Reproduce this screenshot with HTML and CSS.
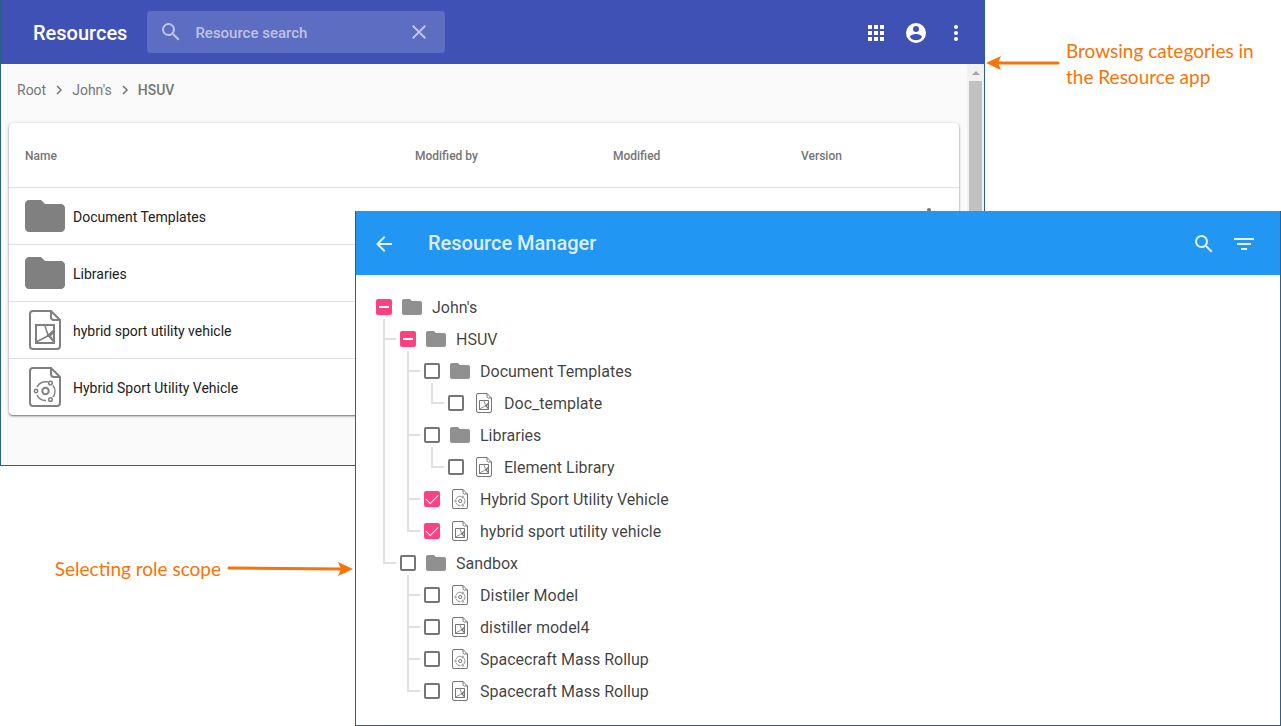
FILE: index.html
```html
<!DOCTYPE html>
<html lang="en">
<head>
<meta charset="utf-8">
<title>Resources and Resource Manager</title>
<link rel="stylesheet" href="styles.css">
</head>
<body>
<svg class="defs" width="0" height="0" aria-hidden="true">
  <symbol id="folder" viewBox="0 0 20 16"><path d="M8 0H2C.9 0 0 .9 0 2v12c0 1.100.9 2 2 2h16c1.100 0 2-.9 2-2V4c0-1.100-.9-2-2-2h-8z"/></symbol>
  <symbol id="diagram" viewBox="0 0 32 40">
    <g fill="none" stroke="currentColor" stroke-width="2">
      <path d="M22 1H4a3 3 0 0 0-3 3v32a3 3 0 0 0 3 3h24a3 3 0 0 0 3-3V10z"/>
      <path d="M22 1v6a3 3 0 0 0 3 3h6"/>
      <path d="M7 15h18v18H7z"/>
      <path d="M7 32l10-5 8-7M16 16l3 9 6 7" stroke-width="1.500"/>
    </g>
    <path d="M16 27l5-4 4-3v3l-3 3 3 4v3l-5-6z"/>
  </symbol>
  <symbol id="model" viewBox="0 0 32 40">
    <g fill="none" stroke="currentColor" stroke-width="2">
      <path d="M22 1H4a3 3 0 0 0-3 3v32a3 3 0 0 0 3 3h24a3 3 0 0 0 3-3V10z"/>
      <path d="M22 1v6a3 3 0 0 0 3 3h6"/>
      <circle cx="16.500" cy="24" r="3.200"/>
      <g stroke-width="1.500">
        <circle cx="7" cy="24" r="1.700"/><circle cx="21.500" cy="16" r="1.800"/><circle cx="21.500" cy="32.500" r="1.800"/>
        <path d="M8 20a9.500 9.500 0 0 1 11-5M8 28a9.500 9.500 0 0 0 9 5.500M24 18.500a9.500 9.500 0 0 1 0 11.500"/>
      </g>
    </g>
  </symbol>
  <symbol id="search" viewBox="0 0 24 24"><path d="M15.500 14h-.79l-.28-.27A6.471 6.471 0 0 0 16 9.500 6.500 6.500 0 1 0 9.500 16c1.610 0 3.090-.59 4.230-1.570l.27.28v.79l5 4.990L20.490 19l-4.990-5zm-6 0C7.010 14 5 11.990 5 9.500S7.010 5 9.500 5 14 7.010 14 9.500 11.990 14 9.500 14z"/></symbol>
  <symbol id="more" viewBox="0 0 24 24"><circle cx="12" cy="6" r="2"/><circle cx="12" cy="12" r="2"/><circle cx="12" cy="18" r="2"/></symbol>
  <symbol id="chevron" viewBox="0 0 8 10"><path d="M2 1l4 4-4 4" fill="none" stroke="currentColor" stroke-width="1.500"/></symbol>
</svg>

<div class="stage">
  <section class="window resources" aria-label="Resources">
    <header class="bar bar-indigo">
      <h1 class="title">Resources</h1>
      <div class="search">
        <svg class="icon"><use href="#search"/></svg>
        <input type="text" class="search-input" placeholder="Resource search" aria-label="Resource search">
        <button type="button" class="clear" aria-label="Clear"><svg class="icon" viewBox="0 0 24 24"><path d="M19 6.410L17.590 5 12 10.590 6.410 5 5 6.410 10.590 12 5 17.590 6.410 19 12 13.410 17.590 19 19 17.590 13.410 12z"/></svg></button>
      </div>
      <div class="actions">
        <button type="button" aria-label="Apps"><svg class="icon" viewBox="0 0 24 24"><path d="M4 8h4V4H4zm6 12h4v-4h-4zm-6 0h4v-4H4zm0-6h4v-4H4zm6 0h4v-4h-4zm6-10v4h4V4zm-6 4h4V4h-4zm6 6h4v-4h-4zm0 6h4v-4h-4z"/></svg></button>
        <button type="button" aria-label="Account"><svg class="icon" viewBox="0 0 24 24"><path d="M12 2a10 10 0 1 0 0 20 10 10 0 0 0 0-20zm0 3a3 3 0 1 1 0 6 3 3 0 0 1 0-6zm0 14.200a7.200 7.200 0 0 1-6-3.220c.03-1.990 4-3.080 6-3.080s5.970 1.090 6 3.080a7.200 7.200 0 0 1-6 3.220z"/></svg></button>
        <button type="button" aria-label="More"><svg class="icon"><use href="#more"/></svg></button>
      </div>
    </header>
    <div class="scroll-area">
      <main class="content">
        <nav class="crumbs" aria-label="Breadcrumb">
          <a href="#root">Root</a>
          <svg class="chevron"><use href="#chevron"/></svg>
          <a href="#johns">John's</a>
          <svg class="chevron"><use href="#chevron"/></svg>
          <a href="#hsuv" class="current">HSUV</a>
        </nav>
        <table class="card">
          <thead>
            <tr><th>Name</th><th class="col-by">Modified by</th><th class="col-date">Modified</th><th class="col-version">Version</th></tr>
          </thead>
          <tbody>
            <tr><td><div class="name"><svg class="folder-large"><use href="#folder"/></svg>Document Templates</div></td><td></td><td></td><td><button type="button" class="row-more" aria-label="More"><svg class="icon"><use href="#more"/></svg></button></td></tr>
            <tr><td><div class="name"><svg class="folder-large"><use href="#folder"/></svg>Libraries</div></td><td></td><td></td><td></td></tr>
            <tr><td><div class="name"><svg class="file-large"><use href="#diagram"/></svg>hybrid sport utility vehicle</div></td><td></td><td></td><td></td></tr>
            <tr><td><div class="name"><svg class="file-large"><use href="#model"/></svg>Hybrid Sport Utility Vehicle</div></td><td></td><td></td><td></td></tr>
          </tbody>
        </table>
      </main>
      <div class="scrollbar" aria-hidden="true"><span class="scroll-up"></span><span class="thumb"></span></div>
    </div>
  </section>

  <section class="window manager" aria-label="Resource Manager">
    <header class="bar bar-blue">
      <button type="button" aria-label="Back"><svg class="icon" viewBox="0 0 24 24"><path d="M20 11H7.830l5.590-5.590L12 4l-8 8 8 8 1.410-1.410L7.830 13H20z"/></svg></button>
      <h2 class="title">Resource Manager</h2>
      <div class="actions">
        <button type="button" aria-label="Search"><svg class="icon"><use href="#search"/></svg></button>
        <button type="button" aria-label="Filter"><svg class="icon" viewBox="0 0 24 24"><path d="M2 6h20v2H2zm3 5h14v2H5zm4 5h6v2H9z"/></svg></button>
      </div>
    </header>
    <ul class="tree">
      <li>
        <label class="node"><input type="checkbox" class="partial"><svg class="folder"><use href="#folder"/></svg>John's</label>
        <ul>
          <li>
            <label class="node"><input type="checkbox" class="partial"><svg class="folder"><use href="#folder"/></svg>HSUV</label>
            <ul>
              <li>
                <label class="node"><input type="checkbox"><svg class="folder"><use href="#folder"/></svg>Document Templates</label>
                <ul><li><label class="node"><input type="checkbox"><svg class="file"><use href="#diagram"/></svg>Doc_template</label></li></ul>
              </li>
              <li>
                <label class="node"><input type="checkbox"><svg class="folder"><use href="#folder"/></svg>Libraries</label>
                <ul><li><label class="node"><input type="checkbox"><svg class="file"><use href="#diagram"/></svg>Element Library</label></li></ul>
              </li>
              <li><label class="node"><input type="checkbox" checked><svg class="file"><use href="#model"/></svg>Hybrid Sport Utility Vehicle</label></li>
              <li><label class="node"><input type="checkbox" checked><svg class="file"><use href="#diagram"/></svg>hybrid sport utility vehicle</label></li>
            </ul>
          </li>
          <li>
            <label class="node"><input type="checkbox"><svg class="folder"><use href="#folder"/></svg>Sandbox</label>
            <ul>
              <li><label class="node"><input type="checkbox"><svg class="file"><use href="#model"/></svg>Distiler Model</label></li>
              <li><label class="node"><input type="checkbox"><svg class="file"><use href="#diagram"/></svg>distiller model4</label></li>
              <li><label class="node"><input type="checkbox"><svg class="file"><use href="#model"/></svg>Spacecraft Mass Rollup</label></li>
              <li><label class="node"><input type="checkbox"><svg class="file"><use href="#diagram"/></svg>Spacecraft Mass Rollup</label></li>
            </ul>
          </li>
        </ul>
      </li>
    </ul>
  </section>

  <div class="note note-browse">
    <svg width="74" height="16" viewBox="0 0 74 16"><path d="M12 8h60" stroke="currentColor" stroke-width="3" stroke-linecap="round"/><path d="M0 8l15-7-3 7 3 7z"/></svg>
    <p>Browsing categories in<br>the Resource app</p>
  </div>
  <div class="note note-scope">
    <p>Selecting role scope</p>
    <svg width="126" height="16" viewBox="0 0 126 16"><path d="M2 7l112 1" stroke="currentColor" stroke-width="3" stroke-linecap="round"/><path d="M126 8l-15-7 3 7-3 7z"/></svg>
  </div>
</div>
</body>
</html>
```
FILE: styles.css
```css
* { box-sizing: border-box; }

body {
  margin: 0;
  background: #fff;
  font-family: Roboto, "Liberation Sans", sans-serif;
  color: #212121;
}

h1, h2, p, ul { margin: 0; padding: 0; }
ul { list-style: none; }
svg { flex: none; fill: currentColor; display: block; }
.defs { position: absolute; }

button {
  display: flex;
  align-items: center;
  justify-content: center;
  width: 40px;
  height: 40px;
  padding: 0;
  border: 0;
  background: none;
  color: inherit;
}

.icon { width: 24px; height: 24px; }

/* Two overlapping windows share the middle column and row */
.stage {
  display: grid;
  grid-template-columns: 355px minmax(0, 1fr) 296px;
  grid-template-rows: 211px 255px auto;
}

.window {
  display: flex;
  flex-direction: column;
  border: 1px solid #2c5f8a;
  border-top: 0;
}
.resources { grid-area: 1 / 1 / 3 / 3; background: #fafafa; }
.manager { grid-area: 2 / 2 / 4 / 4; background: #fff; z-index: 1; }

.bar { display: flex; align-items: center; height: 64px; flex: none; }
.bar > button, .actions { padding-top: 2px; }
.bar-indigo { background: #3f51b5; color: #fff; padding: 0 8px 0 32px; }
.bar-indigo .title { padding-top: 2px; }
.bar-blue { background: #2196f3; color: rgba(255, 255, 255, .87); padding: 0 16px 0 8px; }
.bar-blue .title { margin-left: 24px; }
.title { font-size: 20px; font-weight: 500; line-height: 24px; }
.actions { display: flex; margin-left: auto; }

.search {
  display: flex;
  align-items: center;
  width: 298px;
  height: 42px;
  margin-left: 20px;
  padding: 0 6px 0 12px;
  border-radius: 4px;
  background: rgba(255, 255, 255, .16);
  color: rgba(255, 255, 255, .6);
}
.search-input {
  flex: 1;
  min-width: 0;
  padding: 2px 0 0;
  margin-left: 12px;
  border: 0;
  background: none;
  color: inherit;
  font: 500 15px/20px Roboto, sans-serif;
}
.search-input::placeholder { color: inherit; opacity: 1; }

.scroll-area { display: flex; flex: 1; min-height: 0; }
.content { flex: 1; min-width: 0; padding: 16px 8px; }

.crumbs {
  display: flex;
  align-items: center;
  gap: 9px;
  padding-left: 8px;
  margin-bottom: 23px;
  font-size: 14px;
  line-height: 20px;
  color: #757575;
}
.crumbs a { color: inherit; text-decoration: none; }
.crumbs .current { font-weight: 500; }
.chevron { width: 8px; height: 10px; }

.card {
  width: 100%;
  table-layout: fixed;
  border-spacing: 0;
  border-radius: 4px;
  background: #fff;
  box-shadow: 0 1px 2px rgba(0, 0, 0, .5), 0 1px 5px rgba(0, 0, 0, .1);
  font-size: 14px;
}
.card th {
  height: 64px;
  padding: 2px 16px 0;
  text-align: left;
  font-size: 12px;
  font-weight: 500;
  color: #757575;
}
.col-by { width: 198px; }
.col-date { width: 188px; }
.col-version { width: 174px; }
.card td { height: 57px; padding: 0 16px; border-top: 1px solid #e0e0e0; }
.name { display: flex; align-items: center; gap: 8px; padding-top: 2px; }
.name svg { margin-bottom: 2px; color: #808080; }
.name .folder-large { width: 40px; height: 32px; }
.name .file-large { width: 32px; height: 40px; margin: 0 4px 2px; }
.row-more { width: 28px; margin-left: auto; color: #757575; }

.scrollbar {
  display: flex;
  flex-direction: column;
  align-items: center;
  width: 17px;
  background: #f1f1f1;
}
.scroll-up {
  margin: 7px 0 6px;
  border: 4px solid transparent;
  border-top: 0;
  border-bottom-color: #a3a3a3;
}
.thumb { flex: 1; width: 13px; background: #c1c1c1; }

.tree {
  padding: 16px 20px 18px;
  font-size: 16px;
  line-height: 30px;
  color: rgba(0, 0, 0, .76);
}
.tree ul { padding-left: 24px; }
.tree ul > li { position: relative; }
.tree ul > li::before,
.tree ul > li::after { content: ""; position: absolute; background: #e0e0e0; }
.tree ul > li::before { left: -17px; top: -4px; bottom: 0; width: 2px; }
.tree ul > li:last-child::before { bottom: auto; height: 21px; }
.tree ul > li::after { left: -15px; top: 15px; width: 11px; height: 2px; }

.node { display: flex; align-items: center; height: 32px; padding-top: 2px; }
.folder { width: 20px; height: 16px; margin: 0 10px 2px; color: #909090; }
.file { width: 16px; height: 20px; margin: 0 12px 2px; color: #757575; }

.node input {
  appearance: none;
  display: grid;
  place-items: center;
  flex: none;
  width: 16px;
  height: 16px;
  margin: 0 0 2px;
  border: 2px solid #757575;
  border-radius: 2px;
}
.node input.partial,
.node input:checked { border-color: #ff4081; background: #ff4081; }
.node input.partial::before { content: ""; width: 10px; height: 2px; background: #fff; }
.node input:checked::before {
  content: "";
  width: 11px;
  height: 6px;
  margin-bottom: 3px;
  border: solid #fff;
  border-width: 0 0 1px 1px;
  transform: rotate(-45deg);
}

.note {
  display: flex;
  align-items: center;
  font: 19px/26px Lato, "Open Sans", sans-serif;
  color: #f97306;
}
.note-browse { grid-area: 1 / 3; align-self: start; gap: 6px; padding: 38px 0 0 1px; }
.note-browse svg { align-self: flex-start; margin-top: 17px; }
.note-scope { grid-area: 3 / 1; align-self: start; justify-content: flex-end; gap: 6px; padding: 90px 2px 0 0; }
```
